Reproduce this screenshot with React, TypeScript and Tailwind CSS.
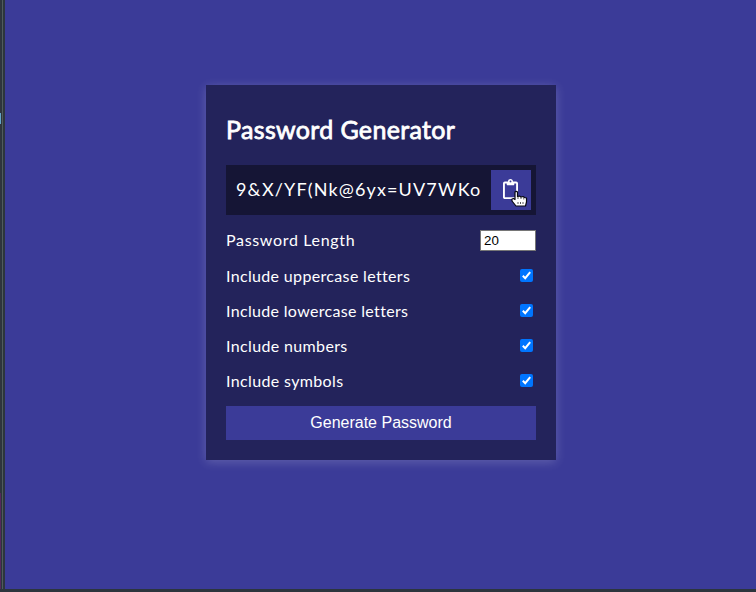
import { FaRegClipboard } from 'react-icons/fa';

const settings = [
  { id: 'uppercase', label: 'Include uppercase letters', tracking: 'tracking-[0.34px]' },
  { id: 'lowercase', label: 'Include lowercase letters', tracking: 'tracking-[0.33px]' },
  { id: 'numbers', label: 'Include numbers', tracking: 'tracking-[0.36px]' },
  { id: 'symbols', label: 'Include symbols', tracking: 'tracking-[0.36px]' },
];

function HandCursor() {
  return (
    <svg className="pointer-events-none absolute left-[20px] top-[20px] h-[18px] w-[17px]" viewBox="0 0 17 18">
      <path
        d="M4 2Q5.2 0.6 6.5 2V6.5L8.5 6L10 7L12 6.5L13.5 7.5L15.5 8V12L14.5 16H5L1 11V9L2.5 8.5L4 9.5Z"
        fill="white"
        stroke="#080811"
        strokeWidth="1.2"
        strokeLinejoin="round"
      />
      <path d="M7 6V9M10 7V9M12.8 7.5V9.5M7 12V14M9.5 12V14M12 12V14" stroke="#111" strokeWidth="0.7" />
    </svg>
  );
}

function Check() {
  return (
    <span className="mr-[3px] mb-[2px] flex h-[13px] w-[13px] items-center justify-center rounded-[2px] bg-[#0075ff]">
      <svg viewBox="0 0 13 13" className="h-[13px] w-[13px]">
        <path d="M2.8 6.8L5.2 9.2L10.2 3.1" fill="none" stroke="white" strokeWidth="2" />
      </svg>
    </span>
  );
}

export default function App() {
  return (
    <div className="flex h-[592px] w-[756px] flex-col overflow-hidden bg-[#3b3b98] font-['Lato',sans-serif] text-white">
      <div className="flex flex-1">
        <div className="flex w-[5px] shrink-0 bg-[#2c353d]">
          <div className="flex w-[1px] flex-col bg-[#30343d]">
            <div className="mt-[113px] h-[11px] bg-[#65a5c8]" />
            <div className="mt-[369px] flex-1 bg-[#55275c]" />
          </div>
          <div className="ml-[1px] w-[1px] bg-[#505b5d]" />
        </div>
        <main className="flex flex-1 items-start pl-[201px] pt-[85px]">
          <section className="w-[350px] bg-[#23235b] p-[20px] shadow-[0px_2px_10px_rgba(255,255,255,0.2)]">
            <h2 className="mt-[10px] h-[30px] whitespace-nowrap text-[25px] font-normal leading-[28px] tracking-[0.34px] [-webkit-text-stroke:0.8px_white]">
              Password Generator
            </h2>
            <div className="mt-[20px] flex h-[50px] items-center justify-between bg-[#151535] pl-[10px] pr-[5px]">
              <span className="whitespace-nowrap pb-[2px] text-[18px] tracking-[1.14px]">9&amp;X/YF(Nk@6yx=UV7WKo</span>
              <button className="relative flex h-[40px] w-[40px] shrink-0 items-center justify-center bg-[#3b3b98]" aria-label="Copy">
                <FaRegClipboard className="mb-[2px] mr-px h-[20px] w-[15px]" />
                <HandCursor />
              </button>
            </div>
            <div className="mt-[15px] flex h-[21px] items-center justify-between">
              <label htmlFor="length" className="pb-[2px] text-[16px] tracking-[0.67px]">
                Password Length
              </label>
              <input
                id="length"
                defaultValue="20"
                className="h-[21px] w-[56px] border border-[#767676] bg-white px-[3px] font-['Liberation_Sans',sans-serif] text-[13.333px] text-black"
              />
            </div>
            <div className="mt-[15px] flex flex-col gap-[15px]">
              {settings.map(({ id, label, tracking }) => (
                <div key={id} className="flex h-[20px] items-center justify-between">
                  <span className={`text-[16px] leading-[20px] ${tracking}`}>{label}</span>
                  <Check />
                </div>
              ))}
            </div>
            <button className="mt-[15px] block h-[34px] w-full bg-[#3b3b98] font-['Liberation_Sans',sans-serif] text-[16px] leading-[34px]">
              Generate Password
            </button>
          </section>
        </main>
      </div>
      <div className="h-[3px] shrink-0 bg-[#2c353d]" />
    </div>
  );
}
